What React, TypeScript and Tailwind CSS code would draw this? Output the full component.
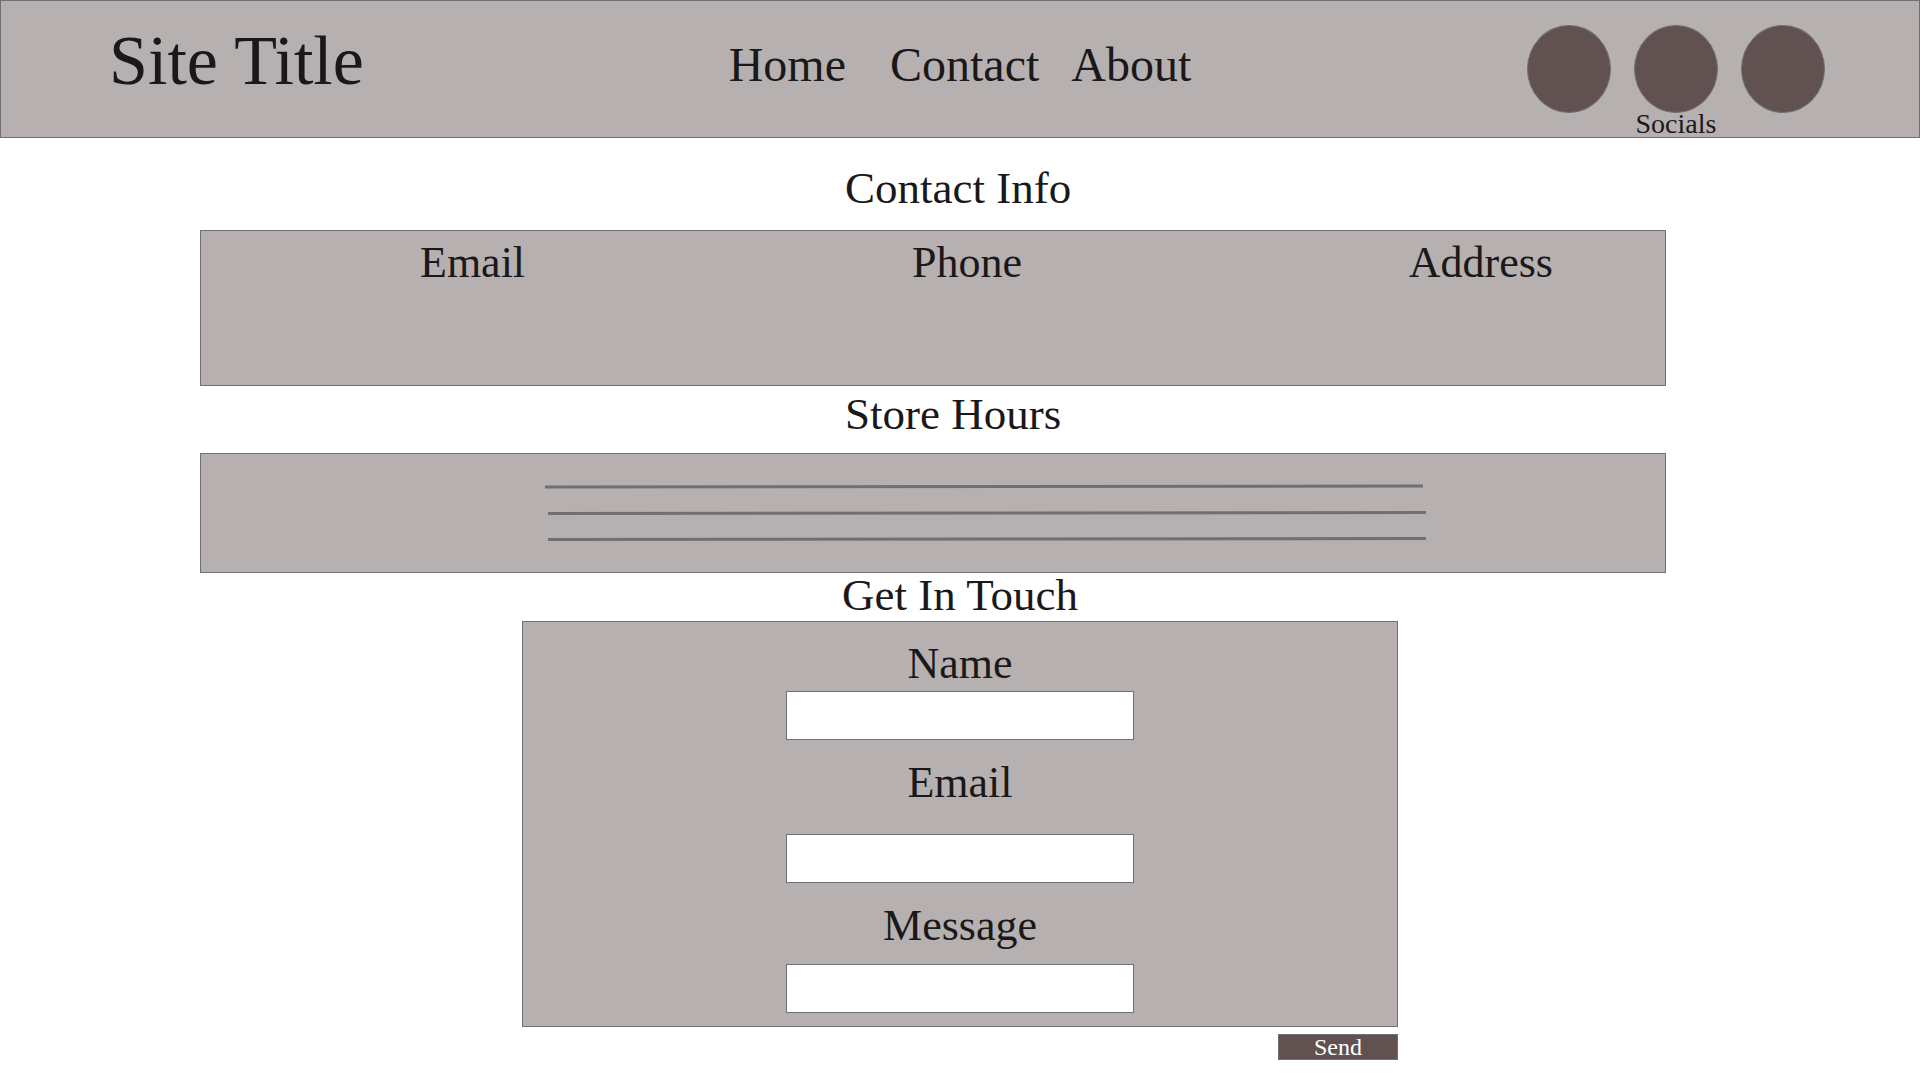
const navLinks = [
  { label: "Home", spacing: "mr-11" },
  { label: "Contact", spacing: "mr-8" },
  { label: "About", spacing: "" },
];

const fields = [
  { id: "name", label: "Name", type: "text", spacing: "mt-[5px]" },
  { id: "email", label: "Email", type: "email", spacing: "mt-[29px]" },
  { id: "message", label: "Message", type: "text", spacing: "mt-[16px]" },
];

function Header() {
  return (
    <header className="grid min-h-[138px] grid-cols-[1fr_auto_1fr] items-start border border-[#707070] bg-[#b6b0b0]">
      <h1 className="pt-[26px] pl-[108px] text-[70px] leading-[68px]">Site Title</h1>
      <nav className="flex pt-10 text-[48px] leading-[48px]">
        {navLinks.map((link) => (
          <a key={link.label} href="#" className={link.spacing}>
            {link.label}
          </a>
        ))}
      </nav>
      <div className="mr-[94px] flex flex-col items-center justify-self-end pt-6">
        <div className="flex gap-[23px]">
          {["First", "Second", "Third"].map((name) => (
            <a
              key={name}
              href="#"
              aria-label={`${name} social profile`}
              className="h-[88px] w-[84px] rounded-[50%] border border-[#707070] bg-[#615251]"
            />
          ))}
        </div>
        <p className="text-[28px] leading-[22px]">Socials</p>
      </div>
    </header>
  );
}

function HoursLines() {
  return (
    <svg
      viewBox="0 0 882 60"
      preserveAspectRatio="none"
      className="mt-[27px] ml-[344px] h-[60px] w-[882px] max-w-full"
      stroke="#707070"
      strokeWidth="3"
      aria-hidden="true"
    >
      <line x1="0" y1="6" x2="878" y2="5" />
      <line x1="3" y1="32.5" x2="881" y2="31.5" />
      <line x1="3" y1="58.5" x2="881" y2="57.5" />
    </svg>
  );
}

export default function App() {
  return (
    <div className="min-h-screen bg-white font-['Liberation_Serif',serif] text-[#1a1818]">
      <Header />
      <main>
        <section className="pt-7">
          <h2 className="mx-auto w-[230px] text-[45px] leading-[44px] whitespace-nowrap">Contact Info</h2>
          <div className="mt-5 mr-[254px] ml-[200px] flex min-h-[156px] justify-between border border-[#707070] bg-[#b6b0b0] pt-[10px] pr-[112px] pl-[219px] text-[44px] leading-[44px]">
            <h3>Email</h3>
            <h3>Phone</h3>
            <h3>Address</h3>
          </div>
        </section>

        <section className="pt-[6px]">
          <h2 className="mx-auto w-[230px] text-[45px] leading-[44px] whitespace-nowrap">Store Hours</h2>
          <div className="mt-[17px] mr-[254px] ml-[200px] min-h-[120px] border border-[#707070] bg-[#b6b0b0]">
            <HoursLines />
          </div>
        </section>

        <section>
          <h2 className="text-center text-[45px] leading-[44px]">Get In Touch</h2>
          <form className="mx-auto mt-1 w-[876px] max-w-full" onSubmit={(e) => e.preventDefault()}>
            <div className="flex flex-col items-center gap-[21px] border border-[#707070] bg-[#b6b0b0] pt-5 pb-[13px]">
              {fields.map((field) => (
                <div key={field.id} className="flex flex-col items-center">
                  <label htmlFor={field.id} className="text-[44px] leading-[44px]">
                    {field.label}
                  </label>
                  <input
                    id={field.id}
                    name={field.id}
                    type={field.type}
                    className={`h-[49px] w-[348px] border border-[#707070] bg-white px-3 text-2xl ${field.spacing}`}
                  />
                </div>
              ))}
            </div>
            <button
              type="submit"
              className="mt-[7px] ml-auto block w-[120px] border border-[#707070] bg-[#615251] text-[24px] leading-[24px] text-white"
            >
              Send
            </button>
          </form>
        </section>
      </main>
    </div>
  );
}
